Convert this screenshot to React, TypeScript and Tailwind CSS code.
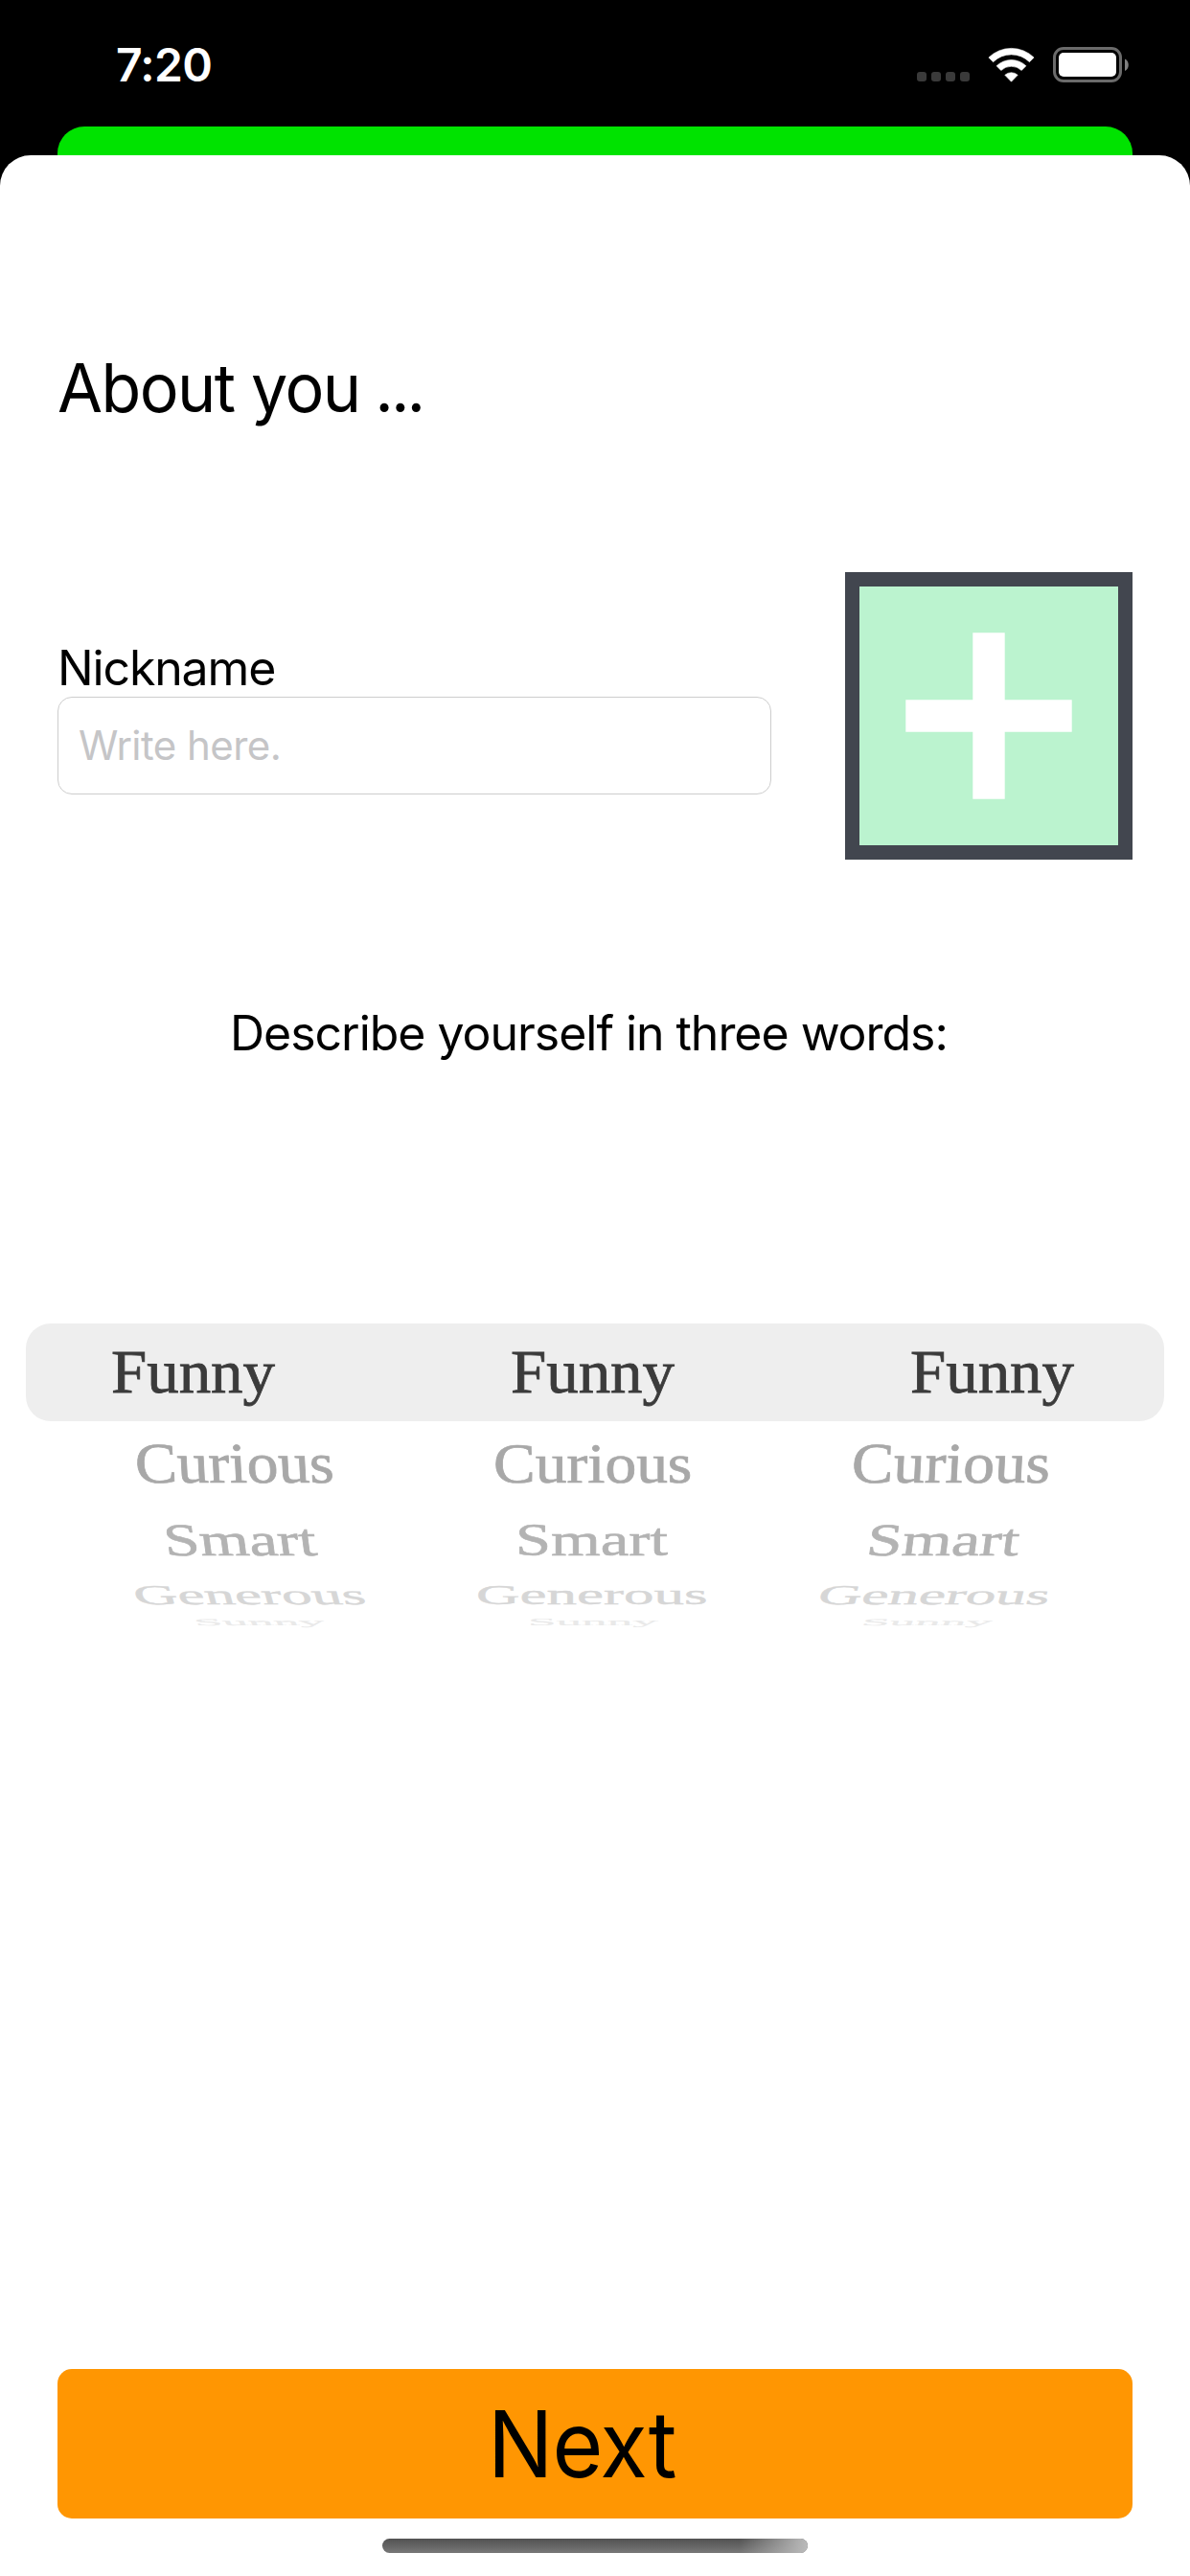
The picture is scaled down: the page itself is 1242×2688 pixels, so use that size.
function StatusIcons() {
  return (
    <div className="flex items-start">
      <div className="mt-[37px] mr-[19px] flex gap-[5px]">
        {[0, 1, 2, 3].map((n) => (
          <span key={n} className="size-[10px] rounded-[3px] bg-[#3a3a3a]" />
        ))}
      </div>
      <svg className="mt-[11px] mr-[19px]" width="49" height="37" viewBox="-0.5 -0.5 49 37" aria-label="Wi-Fi">
        <g fill="#fff" stroke="#fff" strokeWidth="0.6" strokeLinejoin="round">
          <path d="M0.4 10.5A33.8 33.8 0 0 1 47.6 10.5L43 15.2A27 27 0 0 0 5 15.2Z" />
          <path d="M8.6 19.3A22 22 0 0 1 39.4 19.3L34.7 24A15.5 15.5 0 0 0 13.3 24Z" />
          <path d="M17.3 28.8A10 10 0 0 1 30.7 28.8L24 35.7Z" />
        </g>
      </svg>
      <svg className="mt-[11px]" width="80" height="37" viewBox="0 0 80 37" aria-label="Battery">
        <rect x="1.5" y="1.5" width="69" height="34" rx="9.5" fill="none" stroke="#6b6b6b" strokeWidth="3" />
        <rect x="6" y="6" width="60" height="25" rx="5" fill="#fff" />
        <path d="M75 12.5C80 14.5 80 23 75 25Z" fill="#808080" />
      </svg>
    </div>
  );
}

type WheelRow = { word: string; row: string; cell: string; text: string; tilt: [string, string, string] };

const selected = "Funny";

const wheel: WheelRow[] = [
  {
    word: "Curious",
    row: "h-[82px] pt-[7px] pl-[142px]",
    cell: "w-[373px]",
    text: "text-[#a8a8a8]",
    tilt: [
      "[transform:matrix(1.023,0,0.05,0.93,0,0)]",
      "[transform:matrix(1.023,0,0,0.93,0,0)]",
      "[transform:matrix(1.023,0,-0.05,0.93,0,0)]",
    ],
  },
  {
    word: "Smart",
    row: "h-[51px] pt-[1px] pl-[173px]",
    cell: "w-[365px]",
    text: "text-[#b3b3b3]",
    tilt: [
      "[transform:matrix(1.04,0,0.1,0.745,0,0)]",
      "[transform:matrix(1.04,0,0,0.745,0,0)]",
      "[transform:matrix(1.04,0,-0.1,0.745,0,0)]",
    ],
  },
  {
    word: "Generous",
    row: "h-[23px] pt-[1px] pl-[142px]",
    cell: "w-[355px]",
    text: "text-[#d6d6d6]",
    tilt: [
      "[transform:matrix(0.985,0,0.12,0.45,0,0)]",
      "[transform:matrix(0.985,0,0,0.45,0,0)]",
      "[transform:matrix(0.985,0,-0.12,0.45,0,0)]",
    ],
  },
  {
    word: "Sunny",
    row: "h-[71px] pl-[204px]",
    cell: "w-[347px]",
    text: "text-[#e9e9e9]",
    tilt: [
      "[transform:matrix(0.83,0,0.07,0.15,0,0)]",
      "[transform:matrix(0.83,0,0,0.15,0,0)]",
      "[transform:matrix(0.83,0,-0.07,0.15,0,0)]",
    ],
  },
];

function Picker() {
  return (
    <div className="mt-[273px] text-[64px] leading-[71px] whitespace-nowrap font-['Liberation_Serif',serif] [-webkit-text-stroke:0.8px_currentColor]">
      <div className="mx-[27px] flex h-[102px] rounded-[26px] bg-[#eeeeee] pt-[15px] pl-[89px] text-[#3b3b3b]">
        {[0, 1, 2].map((n) => (
          <div key={n} className="w-[417px] shrink-0">
            <span className="inline-block origin-[0_57px] [transform:scaleX(1.045)]">{selected}</span>
          </div>
        ))}
      </div>
      {wheel.map(({ word, row, cell, text, tilt }) => (
        <div key={word} className={`flex ${row} ${text}`}>
          {tilt.map((t) => (
            <div key={t} className={`shrink-0 ${cell}`}>
              <span className={`inline-block origin-[0_57px] ${t}`}>{word}</span>
            </div>
          ))}
        </div>
      ))}
    </div>
  );
}

export default function App() {
  return (
    <div className="flex h-[2688px] w-[1242px] flex-col overflow-hidden bg-black font-['Inter',sans-serif] text-black">
      <header className="flex h-[132px] shrink-0 items-start justify-between pt-[38px] pr-[63px] pl-[121px]">
        <span className="text-[48px] leading-[59px] font-semibold tracking-[-0.7px] text-white">7:20</span>
        <StatusIcons />
      </header>
      <div className="mx-[60px] h-[30px] shrink-0 rounded-t-[28px] bg-[#00e300]" />

      <main className="flex grow flex-col overflow-hidden rounded-t-[32px] bg-white pt-[200px]">
        <h1 className="ml-[60px] origin-left scale-x-[0.975] self-start text-[70px] leading-[85px] tracking-[-1.65px] whitespace-nowrap">
          About you <span className="-ml-[2px] tracking-[-3px]">...</span>
        </h1>

        <section className="mx-[60px] mt-[150px] flex justify-between">
          <label className="flex w-[745px] flex-col pt-[70px]">
            <span className="text-[50px] leading-[60px] tracking-[-1.15px]">Nickname</span>
            <input
              placeholder="Write here."
              className="h-[102px] rounded-[15px] border border-[#cdcdcd] bg-white pb-[2px] pl-[21px] text-[42px] leading-[51px] tracking-[-0.55px] outline-none placeholder:text-[#c5c5c7] placeholder:opacity-100"
            />
          </label>
          <button aria-label="Add picture" className="size-[300px] border-[15px] border-[#42464f] bg-[#bbf3cf]">
            <svg width="270" height="270" viewBox="0 0 270 270">
              <path d="M118.3 48.3h33.4v70h70v33.4h-70v70h-33.4v-70h-70v-33.4h70z" fill="#fff" />
            </svg>
          </button>
        </section>

        <p className="mt-[151px] ml-[240px] text-[50px] leading-[60px] tracking-[-1.03px] whitespace-nowrap">
          Describe yourself in three words:
        </p>

        <Picker />

        <button className="mx-[60px] mt-auto flex h-[156px] shrink-0 rounded-[15px] bg-[#ff9602] pt-[20px] pl-[449px]">
          <span className="origin-left scale-x-[0.945] text-[96px] leading-[116px] tracking-[-1px]">Next</span>
        </button>
        <div className="mt-[21px] mb-[24px] h-[15px] w-[444px] shrink-0 self-center overflow-hidden rounded-full bg-linear-to-b from-[#525252] to-[#787878]">
          <div className="h-full w-full bg-linear-to-r from-transparent from-84% to-[#bbbbbb]" />
        </div>
      </main>
    </div>
  );
}
